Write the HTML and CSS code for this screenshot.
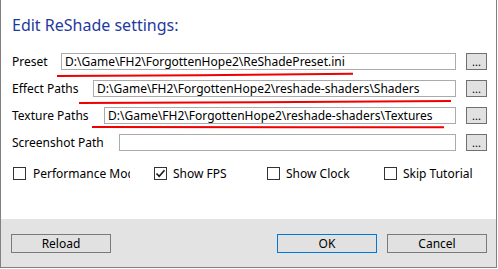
FILE: index.html
```html
<!DOCTYPE html>
<html>
<head>
<meta charset="utf-8">
<link rel="stylesheet" href="styles.css">
</head>
<body>
<div class="dialog">
  <div class="content">
    <h1 class="title">Edit ReShade settings:</h1>
    <div class="rows">
      <div class="row">
        <span class="lbl lbl-preset">Preset</span>
        <div class="field">D:\Game\FH2\ForgottenHope2\ReShadePreset.ini</div>
        <button class="browse">...</button>
      </div>
      <div class="row">
        <span class="lbl lbl-effect">Effect Paths</span>
        <div class="field">D:\Game\FH2\ForgottenHope2\reshade-shaders\Shaders</div>
        <button class="browse">...</button>
      </div>
      <div class="row">
        <span class="lbl lbl-texture">Texture Paths</span>
        <div class="field">D:\Game\FH2\ForgottenHope2\reshade-shaders\Textures</div>
        <button class="browse">...</button>
      </div>
      <div class="row">
        <span class="lbl lbl-shot">Screenshot Path</span>
        <div class="field"></div>
        <button class="browse">...</button>
      </div>
    </div>
    <div class="checks">
      <label class="check check-perf"><span class="box"></span><span class="check-text clip">Performance Mode</span></label>
      <label class="check check-fps"><span class="box"><svg class="tick" viewBox="0 0 13 13" width="13" height="13"><path d="M2.5 6.5 L5.2 9.3 L10.5 3.2" fill="none" stroke="#1a1a1a" stroke-width="1.6"/></svg></span><span class="check-text">Show FPS</span></label>
      <label class="check check-clock"><span class="box"></span><span class="check-text">Show Clock</span></label>
      <label class="check"><span class="box"></span><span class="check-text">Skip Tutorial</span></label>
    </div>
  </div>
  <div class="footer">
    <button class="btn">Reload</button>
    <span class="spacer"></span>
    <button class="btn btn-ok">OK</button>
    <button class="btn">Cancel</button>
  </div>
  <svg class="marks" width="497" height="268" viewBox="0 0 497 268">
    <path d="M57 76 L200 75.2 L353 73.8" fill="none" stroke="#f00000" stroke-width="2"/>
    <path d="M79 103 L260 102.2 L451 101" fill="none" stroke="#f00000" stroke-width="2"/>
    <path d="M92 127 L300 127.2 L444 127.3" fill="none" stroke="#f00000" stroke-width="2"/>
  </svg>
</div>
</body>
</html>
```
FILE: styles.css
```css
* { box-sizing: border-box; }
html, body { margin: 0; padding: 0; background: #ffffff; }
body {
  font-family: "Noto Sans", "Open Sans", sans-serif;
  font-size: 12px;
  color: #000;
}
.dialog {
  position: relative;
  width: 497px;
  height: 268px;
  border-left: 1px solid #808080;
  border-right: 1px solid #808080;
  border-bottom: 1px solid #808080;
  display: flex;
  flex-direction: column;
  background: #fff;
}
.content {
  height: 219px;
  padding: 0 9px 0 11px;
}
.title {
  margin: 15px 0 18px 0;
  font-size: 16px;
  line-height: 20px;
  font-weight: normal;
  color: #1f3a9e;
}
.rows {
  display: flex;
  flex-direction: column;
  gap: 10px;
}
.row {
  display: flex;
  align-items: center;
  height: 17px;
}
.lbl {
  flex: none;
  line-height: 17px;
  white-space: nowrap;
}
.lbl-preset { width: 49px; }
.lbl-effect { width: 81px; }
.lbl-texture { width: 92px; }
.lbl-shot { width: 107px; }
.field {
  flex: 1;
  height: 17px;
  border: 1px solid #ababab;
  padding: 0 3px;
  line-height: 15px;
  white-space: nowrap;
  overflow: hidden;
  background: #fff;
}
.browse {
  flex: none;
  width: 21px;
  height: 17px;
  margin-left: 10px;
  padding: 0;
  border: 1px solid #707070;
  background: #e1e1e1;
  font-family: inherit;
  font-size: 11px;
  line-height: 12px;
  color: #000;
}
.checks {
  display: flex;
  align-items: center;
  height: 17px;
  margin-top: 14px;
  padding-left: 1px;
}
.check {
  display: flex;
  align-items: center;
  gap: 6px;
  flex: none;
  line-height: 17px;
  white-space: nowrap;
}
.check-perf { width: 141px; }
.check-fps { width: 113px; }
.check-clock { width: 117px; }
.box {
  width: 13px;
  height: 13px;
  border: 1px solid #333;
  background: #fff;
  position: relative;
  flex: none;
}
.tick {
  position: absolute;
  left: -1px;
  top: -1px;
}
.check-text.clip {
  display: block;
  width: 97px;
  overflow: hidden;
  margin-left: 1px;
}
.footer {
  flex: 1;
  background: #e3e3e3;
  display: flex;
  align-items: flex-start;
  gap: 10px;
  padding: 15px 9px 0 10px;
}
.spacer { flex: 1; }
.btn {
  width: 100px;
  height: 19px;
  padding: 0;
  border: 1px solid #7a7a7a;
  background: #e1e1e1;
  font-family: inherit;
  font-size: 12px;
  line-height: 17px;
  color: #000;
}
.btn-ok {
  border-color: #0078d7;
}
.marks {
  position: absolute;
  left: -1px;
  top: 0;
  pointer-events: none;
}
```
